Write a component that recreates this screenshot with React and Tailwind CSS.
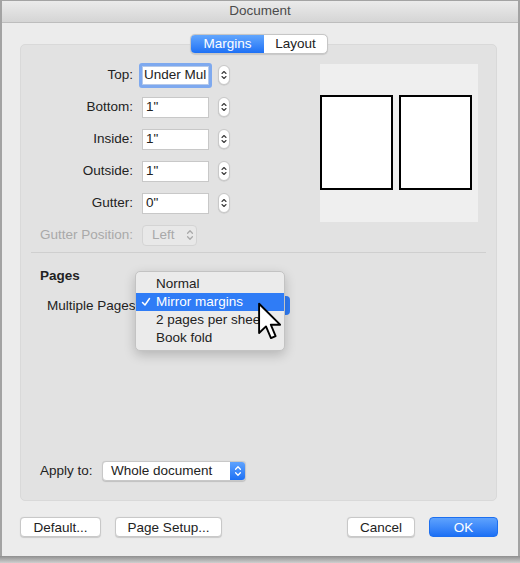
import React from 'react';

const margins = [
    { label: 'Top:', value: 'Under Mul', focused: true },
    { label: 'Bottom:', value: '1"' },
    { label: 'Inside:', value: '1"' },
    { label: 'Outside:', value: '1"' },
    { label: 'Gutter:', value: '0"' },
];

const menuItems = ['Normal', 'Mirror margins', '2 pages per sheet', 'Book fold'];

function Chevrons({ color = '#3a3a3a' }) {
    return (
        <svg width="12" height="20" viewBox="0 0 12 20" fill="none" stroke={color} strokeWidth="1.3" strokeLinecap="round" strokeLinejoin="round">
            <path d="M3.6 8.2 L6 5.8 L8.4 8.2" />
            <path d="M3.6 11.8 L6 14.2 L8.4 11.8" />
        </svg>
    );
}

function Stepper({ className = 'ml-[9px]' }) {
    return (
        <div className={`${className} w-[12px] h-[20px] rounded-full bg-white border border-[#c9c9c9] shadow-[0_0.5px_1px_rgba(0,0,0,0.15)] flex items-center justify-center`}>
            <Chevrons />
        </div>
    );
}

function Cursor() {
    return (
        <svg width="30" height="43" viewBox="0 0 17 25" className="absolute left-[236px] top-[257px]">
            <path d="M1 1 L1 18 L5 14.2 L7.9 21 L10.6 19.8 L7.8 13.2 L13.2 13.2 Z" fill="white" stroke="black" strokeWidth="1.1" strokeLinejoin="round" />
        </svg>
    );
}

export default function App() {
    return (
        <div className="w-[520px] h-[563px] bg-[#c9c9c9] font-[family-name:'Liberation_Sans',Arial,sans-serif] text-[13.5px] text-[#222]">
            <div className="h-[556px] flex flex-col bg-[#ececec] border-x-2 border-t border-[#a3a3a3]">
                {/* title bar */}
                <div className="h-[22px] shrink-0 flex items-center justify-center bg-gradient-to-b from-[#ebebeb] to-[#d5d5d5] border-b border-[#bdbdbd] text-[#4b4b4b]">
                    Document
                </div>

                {/* tabs */}
                <div className="pt-[11px] -mb-[10px] relative z-10 flex">
                    <div className="ml-[188px] flex h-[20px] rounded-[5px] border border-[#c6c6c6] bg-white shadow-[0_0.5px_1px_rgba(0,0,0,0.12)] overflow-hidden">
                        <div className="w-[73px] flex items-center justify-center text-white bg-gradient-to-b from-[#62a6fd] to-[#1c70f5]">Margins</div>
                        <div className="w-[63px] flex items-center justify-center">Layout</div>
                    </div>
                </div>

                {/* group box */}
                <div className="relative ml-[18px] w-[477px] h-[457px] rounded-[5px] bg-[#e2e2e2] border border-[#d9d9d9] flex flex-col">
                    <div className="pt-[19px] flex">
                        <div className="flex flex-col gap-[10px]">
                            {margins.map(m => (
                                <div key={m.label} className="flex items-center h-[22px]">
                                    <div className="w-[112px] text-right">{m.label}</div>
                                    {m.focused ? (
                                        <>
                                            <div className="ml-[6px] w-[73px] h-[25px] rounded-[3px] border-[3px] border-[#7ea9ef] flex items-center">
                                                <div className="w-full h-full bg-white border border-[#b5c9ea] flex items-center pl-[1px] whitespace-nowrap overflow-hidden">{m.value}</div>
                                            </div>
                                            <Stepper className="ml-[6px]" />
                                        </>
                                    ) : (
                                        <>
                                            <div className="ml-[9px] w-[67px] h-[21px] bg-white border border-[#c8c8c8] flex items-center pl-[3px]">{m.value}</div>
                                            <Stepper />
                                        </>
                                    )}
                                </div>
                            ))}
                            <div className="flex items-center h-[22px]">
                                <div className="w-[112px] text-right text-[#a9a9a9] whitespace-nowrap overflow-hidden flex justify-end">Gutter Position:</div>
                                <div className="ml-[9px] w-[55px] h-[21px] rounded-[4px] bg-[#e8e8e8] border border-[#d4d4d4] flex items-center pl-[9px] text-[#a9a9a9]">
                                    <span className="flex-1">Left</span>
                                    <Chevrons color="#a9a9a9" />
                                </div>
                            </div>
                        </div>

                        {/* page preview */}
                        <div className="ml-auto mr-[18px] w-[158px] h-[158px] bg-[#efefef] flex gap-[6px] pt-[31px]">
                            <div className="w-[73px] h-[95px] bg-white border-2 border-black" />
                            <div className="w-[73px] h-[95px] bg-white border-2 border-black" />
                        </div>
                    </div>

                    <div className="mt-[6px] mx-[10px] h-px bg-[#cfcfcf]" />

                    <div className="mt-[13px] pl-[19px] font-bold">Pages</div>
                    <div className="mt-[10px] pl-[26px] flex items-center h-[19px]">
                        <span>Multiple Pages</span>
                        <div className="ml-[4px] w-[150px] h-[19px] rounded-[4px] bg-[#2f7cf6]" />
                    </div>

                    {/* apply to */}
                    <div className="mt-auto mb-[19px] pl-[19px] flex items-center h-[20px]">
                        <div className="w-[62px]">Apply to:</div>
                        <div className="w-[144px] h-[20px] rounded-[4px] bg-white border border-[#c8c8c8] shadow-[0_0.5px_1px_rgba(0,0,0,0.15)] flex items-center overflow-hidden">
                            <span className="flex-1 pl-[8px]">Whole document</span>
                            <div className="w-[15px] h-full bg-gradient-to-b from-[#5ea2fd] to-[#1c70f5] flex items-center justify-center">
                                <Chevrons color="#ffffff" />
                            </div>
                        </div>
                    </div>

                    {/* open popup menu */}
                    <div className="absolute left-[114px] top-[226px] w-[150px] h-[80px] rounded-[5px] bg-[#ebebeb] border border-[#c3c3c3] shadow-[0_4px_12px_rgba(0,0,0,0.2)] pt-[3px]">
                        {menuItems.map((item, i) => (
                            <div key={item} className={`h-[18px] flex items-center whitespace-nowrap overflow-hidden ${i === 1 ? 'bg-[#2f7cf6] text-white' : ''}`}>
                                <span className="w-[20px] flex justify-center">
                                    {i === 1 && (
                                        <svg width="10" height="10" viewBox="0 0 10 10" fill="none" stroke="white" strokeWidth="1.5" strokeLinecap="round" strokeLinejoin="round">
                                            <path d="M1.5 5.5 L4 8 L8.5 1.5" />
                                        </svg>
                                    )}
                                </span>
                                {item}
                            </div>
                        ))}
                    </div>

                    <Cursor />
                </div>

                {/* buttons */}
                <div className="mt-[16px] flex items-center pl-[18px] pr-[20px]">
                    <button className="w-[81px] h-[20px] rounded-[4px] bg-white border border-[#c8c8c8] shadow-[0_0.5px_1px_rgba(0,0,0,0.15)]">Default...</button>
                    <button className="ml-[14px] w-[107px] h-[20px] rounded-[4px] bg-white border border-[#c8c8c8] shadow-[0_0.5px_1px_rgba(0,0,0,0.15)]">Page Setup...</button>
                    <button className="ml-auto w-[68px] h-[20px] rounded-[4px] bg-white border border-[#c8c8c8] shadow-[0_0.5px_1px_rgba(0,0,0,0.15)]">Cancel</button>
                    <button className="ml-[14px] w-[69px] h-[20px] rounded-[4px] text-white bg-gradient-to-b from-[#5ea2fd] to-[#1c70f5] border border-[#1d6ff0]">OK</button>
                </div>
            </div>
            <div className="h-[7px] bg-gradient-to-b from-[#8f8f8f] to-[#cfcfcf]" />
        </div>
    );
}
